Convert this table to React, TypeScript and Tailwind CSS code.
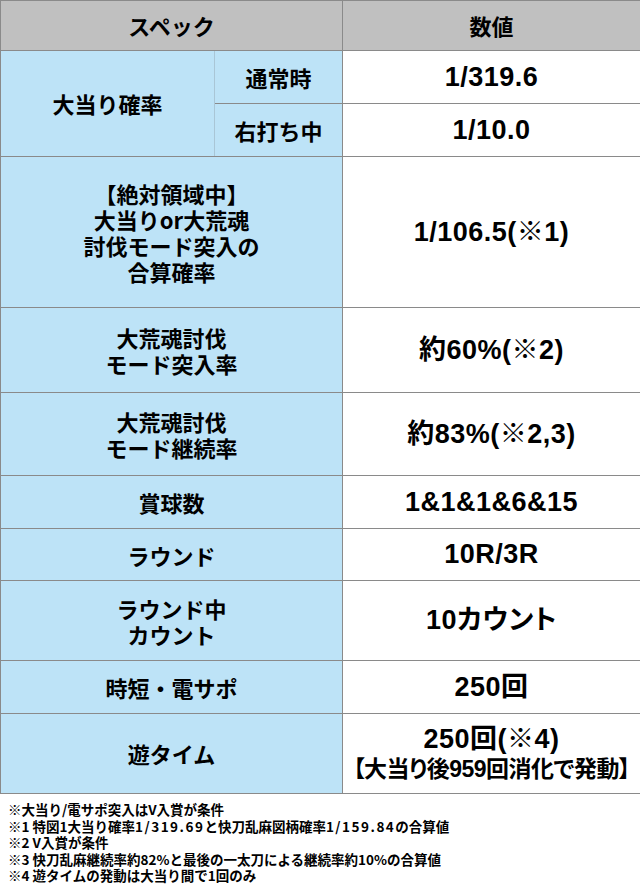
import React from "react";

const label = "bg-[#bde3f7] border border-[#8a8a8a] text-center align-middle text-[22px] font-bold";
const value =
  "bg-white border border-[#8a8a8a] text-center align-middle font-['Liberation_Sans','Noto_Sans_CJK_JP',sans-serif] text-[27px] font-bold tracking-[0.5px] [font-feature-settings:'palt']";

const rows: { label: string[]; value: string[]; h: string }[] = [
  { label: ["【絶対領域中】", "大当りor大荒魂", "討伐モード突入の", "合算確率"], value: ["1/106.5(※1)"], h: "h-[151px]" },
  { label: ["大荒魂討伐", "モード突入率"], value: ["約60%(※2)"], h: "h-[85px]" },
  { label: ["大荒魂討伐", "モード継続率"], value: ["約83%(※2,3)"], h: "h-[83px]" },
  { label: ["賞球数"], value: ["1&1&1&6&15"], h: "h-[53px]" },
  { label: ["ラウンド"], value: ["10R/3R"], h: "h-[52px]" },
  { label: ["ラウンド中", "カウント"], value: ["10カウント"], h: "h-[80px]" },
  { label: ["時短・電サポ"], value: ["250回"], h: "h-[53px]" },
];

export default function App() {
  return (
    <div className="w-[640px] h-[890px] bg-white text-black font-['Noto_Sans_CJK_JP',sans-serif]">
      <table className="w-[640px] border-collapse table-fixed">
        <colgroup>
          <col className="w-[214px]" />
          <col className="w-[128px]" />
          <col className="w-[298px]" />
        </colgroup>
        <tbody>
          <tr className="h-[50px]">
            <th colSpan={2} className="bg-[#c0c0c0] border border-[#8a8a8a] text-[22px] font-bold">
              スペック
            </th>
            <th className="bg-[#c0c0c0] border border-[#8a8a8a] text-[22px] font-bold">数値</th>
          </tr>
          <tr className="h-[53px]">
            <td rowSpan={2} className={`${label} border-r-[#a9c6d6]`}>
              大当り確率
            </td>
            <td className={`${label} border-l-[#a9c6d6]`}>通常時</td>
            <td className={value}>1/319.6</td>
          </tr>
          <tr className="h-[53px]">
            <td className={`${label} border-l-[#a9c6d6]`}>右打ち中</td>
            <td className={value}>1/10.0</td>
          </tr>
          {rows.map((r, i) => (
            <tr key={i} className={r.h}>
              <td colSpan={2} className={`${label} leading-[26px]`}>
                {r.label.map((t) => (
                  <div key={t}>{t}</div>
                ))}
              </td>
              <td className={value}>
                {r.value.map((t) => (
                  <div key={t}>{t}</div>
                ))}
              </td>
            </tr>
          ))}
          <tr className="h-[80px]">
            <td colSpan={2} className={label}>
              遊タイム
            </td>
            <td className={`${value} leading-[30px]`}>
              <div>250回(※4)</div>
              <div className="text-[23px] tracking-[-0.5px] whitespace-nowrap">【大当り後959回消化で発動】</div>
            </td>
          </tr>
        </tbody>
      </table>
      {/* footnotes */}
      <div className="pt-[7px] pl-[8px] text-[13.5px] font-bold leading-[16.5px]">
        <div>※大当り/電サポ突入はV入賞が条件</div>
        <div>
          ※1 特図1大当り確率<span className="tracking-[1.5px]">1/319.69</span>と快刀乱麻図柄確率
          <span className="tracking-[1.5px]">1/159.84</span>の合算値
        </div>
        <div>※2 V入賞が条件</div>
        <div>※3 快刀乱麻継続率約82%と最後の一太刀による継続率約10%の合算値</div>
        <div>※4 遊タイムの発動は大当り間で1回のみ</div>
      </div>
    </div>
  );
}
